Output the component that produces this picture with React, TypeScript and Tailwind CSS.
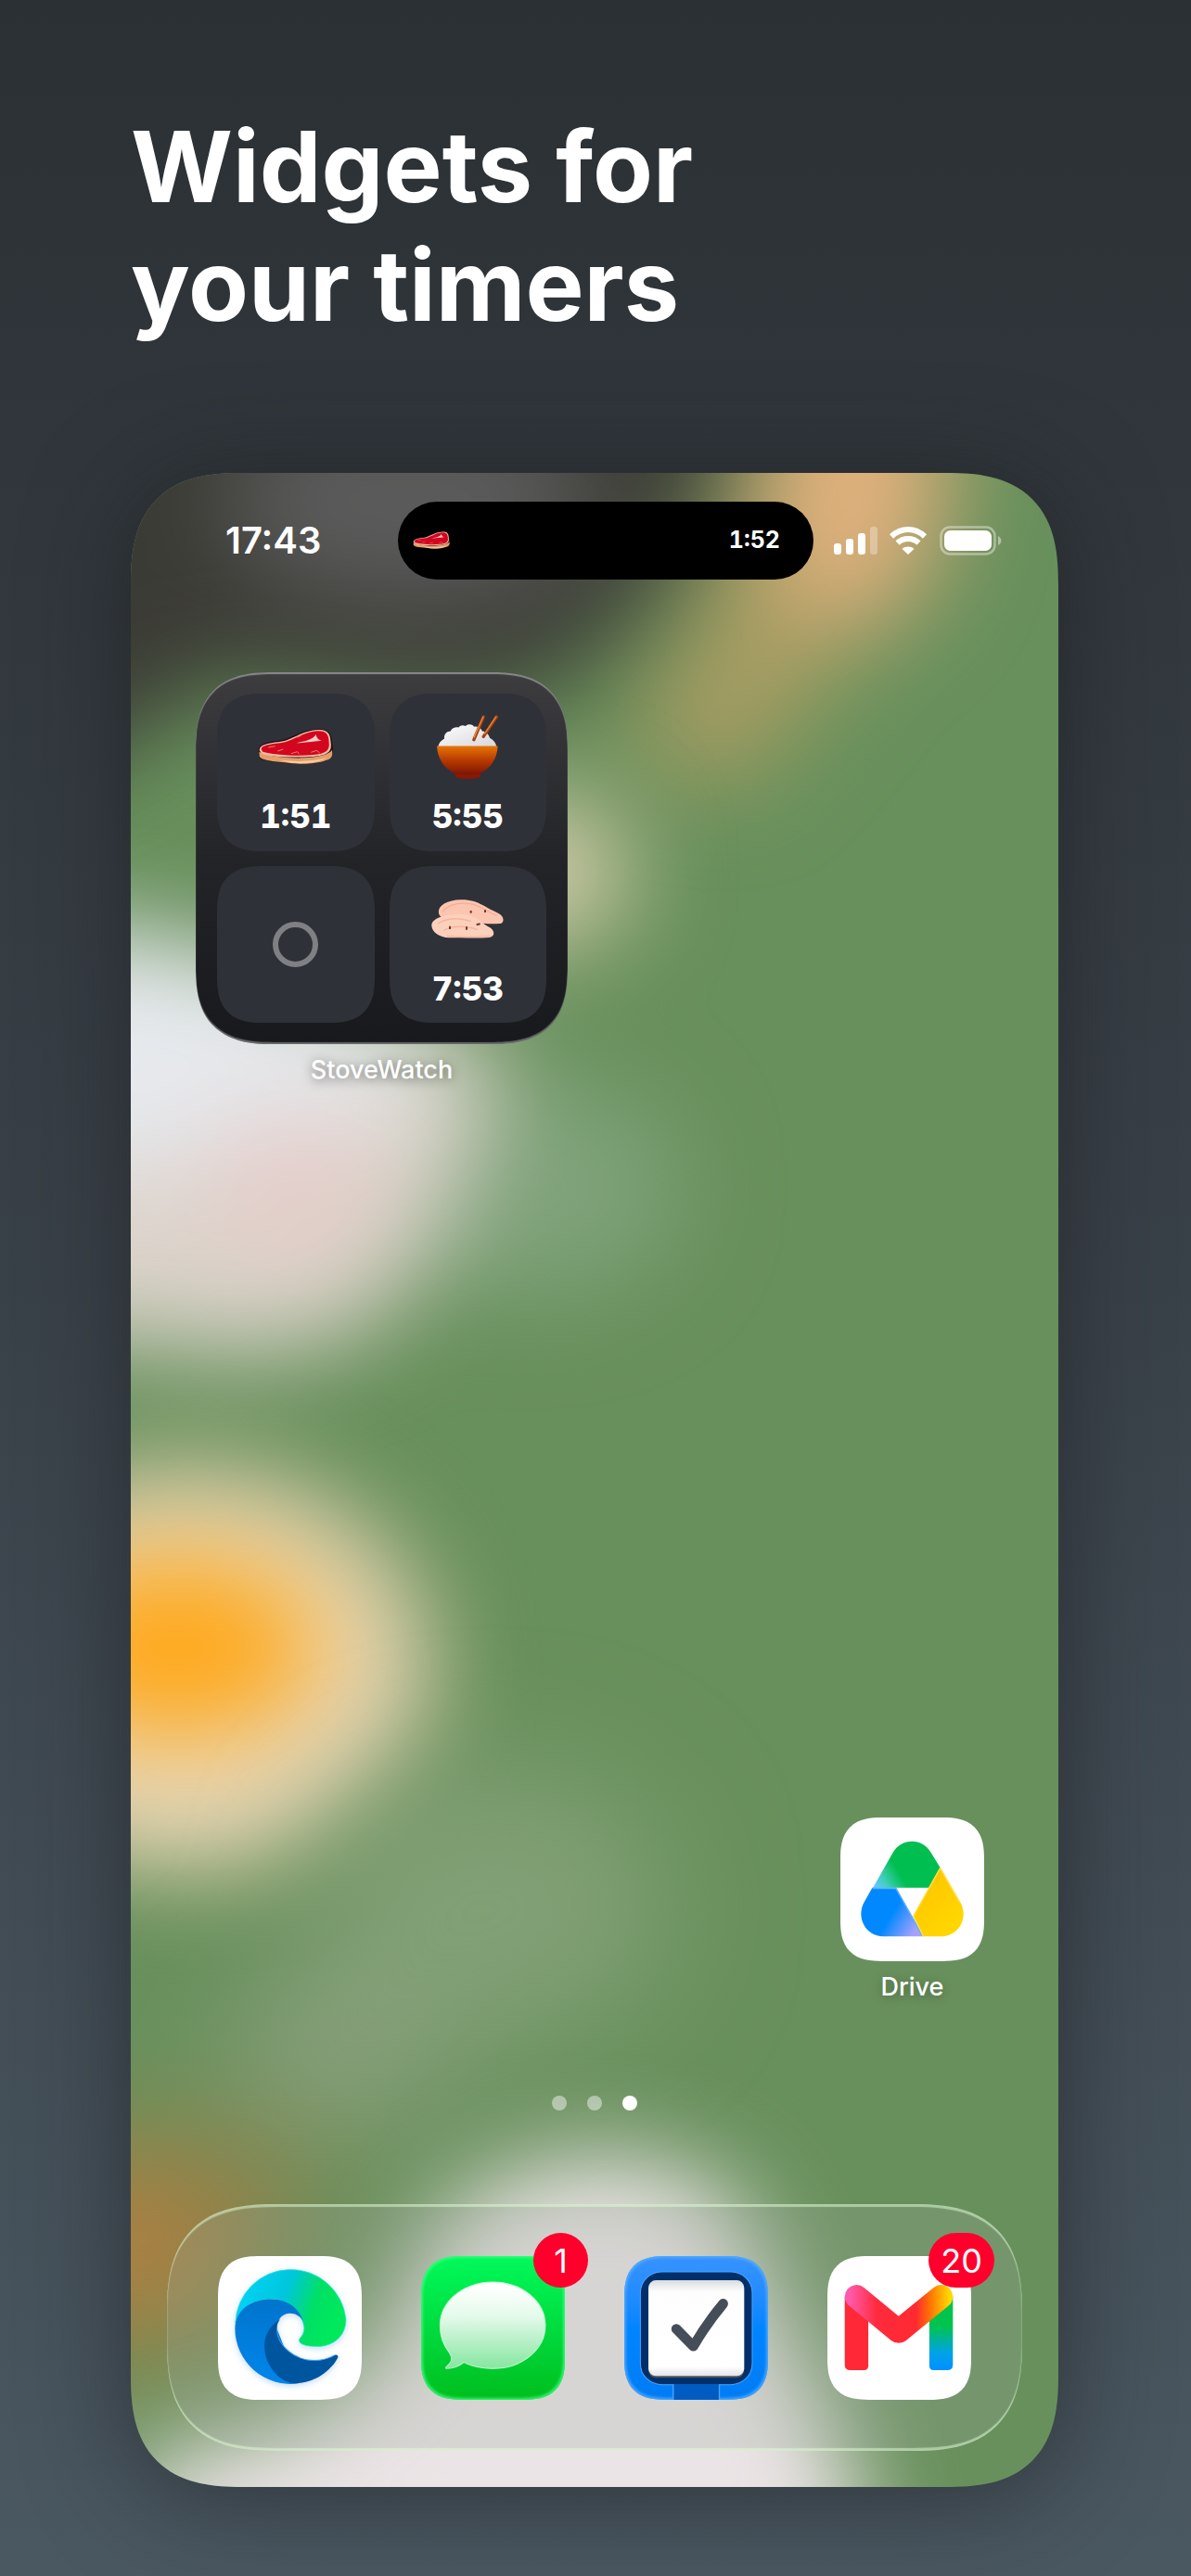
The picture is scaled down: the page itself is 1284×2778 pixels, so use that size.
import type { ReactNode } from 'react';

function Steak({ className }: { className: string }) {
  return (
    <svg viewBox="0 0 243 116" className={className} aria-hidden="true">
      <path d="M2 72C0 52 22 42 66 38C112 33 135 3 196 1C232 0 239 18 241 48C246 74 243 92 225 101C200 114 150 118 105 112C66 108 12 106 3 92Z" fill="#1c1513" />
      <path d="M4 74C22 86 80 96 150 94C190 92 230 84 240 68C243 88 238 97 220 102C190 114 140 116 100 110C60 106 14 104 5 90Z" fill="#e2a06a" />
      <path d="M70 100C120 108 180 106 222 94C200 110 140 116 96 108Z" fill="#f6cda4" />
      <path d="M5 70C4 52 30 46 70 42C115 36 138 6 196 3C228 2 235 18 236 46C240 72 228 86 180 90C120 94 40 92 12 80Z" fill="#f7b9a4" />
      <path d="M11 66C12 54 36 50 72 46C118 40 142 10 194 7C224 7 229 20 230 44C233 70 220 80 178 84C120 90 44 82 16 74Z" fill="#d2061f" />
      <path d="M124 46C152 40 180 34 188 18C190 30 196 35 206 38C194 39 160 44 124 46Z" fill="#f9c9c0" />
      <path d="M64 72L82 66M108 80L128 74L134 82M172 76L190 70L200 78M34 60L56 56M128 28L142 20" stroke="#f07a78" strokeWidth="3" fill="none" />
    </svg>
  );
}

function RiceBowl({ className }: { className: string }) {
  return (
    <svg viewBox="0 0 196 206" className={className} aria-hidden="true">
      <defs>
        <linearGradient id="bowl" x1="0" y1="0" x2="0" y2="1">
          <stop offset="0" stopColor="#e57505" />
          <stop offset="0.5" stopColor="#b93a02" />
          <stop offset="1" stopColor="#7c1502" />
        </linearGradient>
        <linearGradient id="rice" x1="0" y1="0" x2="1" y2="1">
          <stop offset="0" stopColor="#ffffff" />
          <stop offset="1" stopColor="#d6d6dc" />
        </linearGradient>
      </defs>
      <path d="M4 102C6 90 14 82 24 76C22 62 32 52 44 52C48 42 60 38 70 40C76 32 86 32 92 36C100 28 114 30 120 38C130 36 142 42 146 52C160 54 168 64 170 74C182 80 190 90 192 102Z" fill="url(#rice)" />
      <path d="M150 6L119 80M192 6L150 70" stroke="#a8410a" strokeWidth="10" strokeLinecap="round" />
      <path d="M149 6L120 72M190 6L154 60" stroke="#e88734" strokeWidth="4" strokeLinecap="round" />
      <path d="M56 180H142L138 200C130 207 68 207 60 200Z" fill="#8a1804" />
      <path d="M0 100H196C194 142 172 172 140 188C120 193 76 193 56 188C24 172 2 142 0 100Z" fill="url(#bowl)" />
    </svg>
  );
}

function Chicken({ className }: { className: string }) {
  return (
    <svg viewBox="0 0 234 126" className={className} aria-hidden="true">
      <path d="M24 44C20 22 48 2 96 1C150 0 168 24 216 44C236 52 238 76 222 78C184 82 120 74 60 66C34 62 26 54 24 44Z" fill="#fbc5b0" />
      <path d="M36 40C56 12 100 8 138 16C168 26 180 40 212 52" fill="none" stroke="#f4ad98" strokeWidth="4" />
      <path d="M1 86C0 62 36 50 86 48C140 44 160 74 184 88C206 98 208 120 188 123C150 126 100 124 58 124C24 122 4 106 1 86Z" fill="#fdd0bb" />
      <path d="M20 78C56 58 96 60 128 70M40 100C70 84 116 84 150 98M50 118C100 122 150 122 190 118" fill="none" stroke="#f6b49e" strokeWidth="4" />
      <path d="M128 36v8M174 34v8M60 86v10M114 88v10M146 82l12 -3" stroke="#6b3a2c" strokeWidth="6" />
    </svg>
  );
}

function EdgeLogo() {
  return (
    <svg viewBox="0 0 464 464" className="size-full" aria-hidden="true">
      <defs>
        <linearGradient id="edgeTop" x1="0" y1="0" x2="1" y2="0.25">
          <stop offset="0.1" stopColor="#00d2f6" />
          <stop offset="0.5" stopColor="#00c6dc" />
          <stop offset="0.78" stopColor="#00e065" />
          <stop offset="1" stopColor="#00e85c" />
        </linearGradient>
        <linearGradient id="edgeBlue" x1="0.5" y1="0" x2="0.4" y2="1">
          <stop offset="0" stopColor="#0074cc" />
          <stop offset="1" stopColor="#0086ec" />
        </linearGradient>
        <filter id="edgeShadow" x="-20%" y="-20%" width="140%" height="140%">
          <feDropShadow dx="0" dy="6" stdDeviation="9" floodColor="#2070d0" floodOpacity="0.25" />
        </filter>
      </defs>
      <g filter="url(#edgeShadow)">
        <path d="M56 215A179 179 0 0 1 413 205C413 260 370 292 320 292C285 292 262 285 262 272C262 262 278 258 278 232C275 190 235 139 170 139C110 139 65 175 56 215Z" fill="url(#edgeTop)" stroke="#2ae8e0" strokeWidth="2" />
        <path d="M55 233C56 170 112 139 170 139C235 139 272 180 278 224A44 44 0 0 0 190 234L260 411A179 179 0 0 1 55 233Z" fill="url(#edgeBlue)" />
        <path d="M202 203C166 225 150 255 150 290C150 350 195 405 245 411C310 413 365 370 387 328C389 320 383 317 376 320C355 332 335 337 310 337C250 337 190 290 190 234C190 222 194 212 202 203Z" fill="#00559f" />
        <path d="M376 320C355 332 335 337 310 337C250 337 190 290 190 234" fill="none" stroke="#3b9ff0" strokeWidth="3" />
      </g>
    </svg>
  );
}

function MessagesLogo() {
  return (
    <svg viewBox="0 0 464 464" className="size-full" aria-hidden="true">
      <defs>
        <linearGradient id="bubble" x1="0" y1="0" x2="0" y2="1">
          <stop offset="0.05" stopColor="#ffffff" />
          <stop offset="0.4" stopColor="#e3faea" />
          <stop offset="1" stopColor="#86e6a0" />
        </linearGradient>
      </defs>
      <path d="M231 84C325 84 401 146 401 224C401 302 325 363 231 363C196 363 164 356 138 343C120 357 98 363 82 363C78 362 79 358 84 355C98 344 102 328 91 312C72 288 61 258 61 224C61 146 137 84 231 84Z" fill="url(#bubble)" stroke="#c9fad8" strokeWidth="3" />
    </svg>
  );
}

function ThingsLogo() {
  return (
    <svg viewBox="0 0 464 464" className="size-full" aria-hidden="true">
      <defs>
        <linearGradient id="paper" x1="0" y1="0" x2="0" y2="1">
          <stop offset="0" stopColor="#d9dcdf" />
          <stop offset="0.12" stopColor="#fdfdfd" />
          <stop offset="0.9" stopColor="#ffffff" />
          <stop offset="1" stopColor="#e4e4e6" />
        </linearGradient>
      </defs>
      <rect x="52" y="51" width="361" height="364" rx="68" fill="#002f6a" stroke="#4aa6ff" strokeWidth="3" />
      <rect x="158" y="413" width="149" height="51" fill="#005cc2" />
      <path d="M158 464V414M307 464V414" stroke="#4aa6ff" strokeWidth="4" />
      <rect x="78" y="84" width="309" height="309" rx="24" fill="#4d545c" />
      <rect x="78" y="78" width="309" height="309" rx="24" fill="url(#paper)" />
      <path d="M168 235L223 291Q270 212 319 154" fill="none" stroke="#454e58" strokeWidth="32" strokeLinecap="round" strokeLinejoin="round" />
    </svg>
  );
}

function GmailLogo() {
  return (
    <svg viewBox="0 0 464 464" className="size-full" aria-hidden="true">
      <defs>
        <linearGradient id="mailTop" gradientUnits="userSpaceOnUse" x1="56" y1="0" x2="405" y2="0">
          <stop offset="0.05" stopColor="#ff59a8" />
          <stop offset="0.3" stopColor="#ff2a3c" />
          <stop offset="0.66" stopColor="#ff2a30" />
          <stop offset="0.8" stopColor="#ff7a00" />
          <stop offset="0.97" stopColor="#ffd900" />
        </linearGradient>
        <linearGradient id="mailRight" gradientUnits="userSpaceOnUse" x1="0" y1="150" x2="0" y2="368">
          <stop offset="0.35" stopColor="#00c44d" />
          <stop offset="0.75" stopColor="#00a2e8" />
          <stop offset="1" stopColor="#0090ff" />
        </linearGradient>
      </defs>
      <path d="M56 131H132V354Q132 368 118 368H74Q56 368 56 350Z" fill="#ff2836" />
      <path d="M329 131H405V350Q405 368 387 368H343Q329 368 329 354Z" fill="url(#mailRight)" />
      <path d="M94 131L230 243L367 131" fill="none" stroke="url(#mailTop)" strokeWidth="76" strokeLinecap="round" strokeLinejoin="round" />
    </svg>
  );
}

function DriveLogo() {
  return (
    <svg viewBox="0 0 464 464" className="size-full" aria-hidden="true">
      <defs>
        <linearGradient id="driveGreen" gradientUnits="userSpaceOnUse" x1="115" y1="225" x2="190" y2="180">
          <stop offset="0" stopColor="#62c8ff" />
          <stop offset="0.4" stopColor="#3fceb8" />
          <stop offset="1" stopColor="#00bf50" />
        </linearGradient>
        <linearGradient id="driveBlue" gradientUnits="userSpaceOnUse" x1="160" y1="320" x2="240" y2="370">
          <stop offset="0" stopColor="#0088ff" />
          <stop offset="1" stopColor="#a6a2fb" />
        </linearGradient>
        <linearGradient id="driveYellow" gradientUnits="userSpaceOnUse" x1="250" y1="250" x2="390" y2="380">
          <stop offset="0" stopColor="#ffc800" />
          <stop offset="1" stopColor="#ffda00" />
        </linearGradient>
      </defs>
      <path d="M105 227L168 116C196 64 266 64 294 116L322 162L285 227Z" fill="url(#driveGreen)" />
      <path d="M103 227H180L268 384H138C82 384 50 324 76 275Z" fill="url(#driveBlue)" />
      <path d="M104 229H179L264 380" fill="none" stroke="#59b0ff" strokeWidth="4" />
      <path d="M322 160L387 273C415 324 382 384 325 384H268L235 318Z" fill="url(#driveYellow)" />
      <path d="M268 384L236 318L322 164L385 274" fill="none" stroke="#ffe04a" strokeWidth="4" />
    </svg>
  );
}

function Wallpaper() {
  return (
    <svg
      viewBox="0 0 1000 2172"
      preserveAspectRatio="none"
      className="absolute inset-0 size-full"
      aria-hidden="true"
    >
      <defs>
        <filter id="soft" x="-100%" y="-100%" width="300%" height="300%" colorInterpolationFilters="sRGB">
          <feGaussianBlur stdDeviation="52" />
        </filter>
        <filter id="softer" x="-100%" y="-100%" width="300%" height="300%" colorInterpolationFilters="sRGB">
          <feGaussianBlur stdDeviation="66" />
        </filter>
      </defs>
      <rect width="1000" height="2172" fill="#68905c" />
      <g filter="url(#soft)">
        <path d="M700 -160H910C890 60 770 220 650 340L530 300C600 190 670 60 700 -160Z" fill="#a99d62" />
        <ellipse cx="780" cy="10" rx="100" ry="160" fill="#e0b07c" />
        <path d="M-160 -160H660C640 50 560 180 430 240C300 275 170 225 100 225C40 240 0 330 -160 340Z" fill="#3b3b35" />
        <ellipse cx="300" cy="30" rx="200" ry="110" fill="#5b5b5b" />
      </g>
      <g filter="url(#soft)">
        <ellipse cx="440" cy="430" rx="100" ry="85" fill="#d0cba8" />
        <ellipse cx="430" cy="770" rx="160" ry="120" fill="#7fa27a" />
        <path d="M-160 480C40 480 280 560 400 630C380 720 350 790 310 860C270 935 180 960 80 950C20 940 -60 935 -160 935Z" fill="#dbd3ca" />
        <path d="M-160 480C40 480 240 560 340 640C200 740 100 740 -160 770Z" fill="#e6e9ed" />
        <ellipse cx="170" cy="770" rx="95" ry="80" fill="#e4cdc9" />
      </g>
      <g filter="url(#soft)">
        <ellipse cx="60" cy="1290" rx="262" ry="218" fill="#e9d7b6" />
        <ellipse cx="50" cy="1267" rx="150" ry="98" fill="#ffa91c" />
      </g>
      <g filter="url(#softer)">
        <ellipse cx="390" cy="1545" rx="190" ry="150" fill="#81a075" />
        <ellipse cx="225" cy="1700" rx="120" ry="90" fill="#88a07c" />
        <ellipse cx="0" cy="1910" rx="140" ry="110" fill="#b27e3f" />
        <ellipse cx="120" cy="1840" rx="80" ry="50" fill="#8a7f46" />
      </g>
      <g filter="url(#soft)">
        <path d="M-20 2290L10 2140C180 2110 270 2060 300 1960C340 1790 610 1770 670 1900C700 2040 790 2080 800 2290Z" fill="#ebe4e6" />
      </g>
    </svg>
  );
}

function StatusIcons() {
  return (
    <svg viewBox="0 0 181 32" className="ml-[22px] h-8 w-[181px] shrink-0" fill="white" role="img" aria-label="Signal, Wi-Fi, battery">
      <rect x="0" y="19" width="8" height="12" rx="3" />
      <rect x="13" y="14" width="8" height="17" rx="3" />
      <rect x="26" y="8" width="8" height="23" rx="3" />
      <rect x="39" y="1" width="8" height="30" rx="3" opacity="0.3" />
      <g fill="none" stroke="white" strokeWidth="6">
        <path d="M62 11.5C72.500 1.500 87.500 1.500 98 11.500" />
        <path d="M68.500 18.500C75 12.500 85 12.500 91.500 18.500" />
      </g>
      <path d="M80 31L73.500 25C77 21.800 83 21.800 86.500 25Z" />
      <rect x="115.500" y="1.500" width="58" height="29" rx="9.500" fill="none" stroke="white" strokeWidth="2.500" opacity="0.4" />
      <rect x="119" y="5" width="51" height="22" rx="6.500" />
      <path d="M177 11C181.500 13 181.500 19 177 21Z" opacity="0.45" />
    </svg>
  );
}

function TimerTile({ time, children }: { time: string; children: ReactNode }) {
  return (
    <div className="flex aspect-square flex-col items-center rounded-[50px] bg-[#2f3138] pt-[22px] [corner-shape:superellipse(1.4)]">
      <div className="flex h-[70px] items-center justify-center">{children}</div>
      <p className="mt-5 text-[35px] leading-10 font-extrabold text-white tabular-nums">{time}</p>
    </div>
  );
}

function TimerWidget() {
  return (
    <section className="w-[401px]">
      <div className="grid grid-cols-2 gap-4 rounded-[84px] bg-linear-to-b from-[#3d3d40] via-[#232428] to-[#18191c] p-[23px] shadow-[inset_0_2px_1px_rgba(255,255,255,0.4),inset_0_-2px_1px_rgba(255,255,255,0.35)] [corner-shape:superellipse(1.4)]">
        <TimerTile time="1:51">
          <Steak className="w-[81px]" />
        </TimerTile>
        <TimerTile time="5:55">
          <RiceBowl className="h-[69px]" />
        </TimerTile>
        <div className="flex aspect-square items-center justify-center rounded-[50px] bg-[#2f3138] [corner-shape:superellipse(1.4)]">
          <span className="size-[49px] rounded-full border-6 border-[#7f8084]" />
        </div>
        <TimerTile time="7:53">
          <Chicken className="w-[78px]" />
        </TimerTile>
      </div>
      <p className="mt-[10px] text-center text-[27px] leading-9 font-medium text-white [text-shadow:0_2px_12px_rgba(0,0,0,0.5)]">
        StoveWatch
      </p>
    </section>
  );
}

interface AppIconProps {
  name: string;
  background: string;
  badge?: number;
  children: ReactNode;
}

function AppIcon({ name, background, badge, children }: AppIconProps) {
  return (
    <button type="button" aria-label={name} className="relative size-[155px]">
      <span className={`block size-full overflow-hidden rounded-[45px] [corner-shape:superellipse(1.4)] ${background}`}>
        {children}
      </span>
      {badge && (
        <span className="absolute -top-[25px] -right-[25px] flex h-[59px] min-w-[59px] items-center justify-center rounded-full bg-[#ff002d] px-[13px] text-[36px] leading-none text-white">
          {badge}
        </span>
      )}
    </button>
  );
}

export default function App() {
  return (
    <main className="flex min-h-screen flex-col bg-linear-to-b from-[#2b3034] via-[#394148] to-[#4a5861] px-[141px] pt-[116px] pb-24 font-['Inter',sans-serif]">
      <h1 className="text-[106px] leading-[128px] font-bold text-white">
        Widgets for
        <br />
        your timers
      </h1>

      <div className="relative isolate mt-[138px] flex max-w-[1000px] flex-1 flex-col overflow-hidden rounded-[122px] shadow-[0_10px_110px_rgba(28,28,32,0.6)] [corner-shape:superellipse(1.4)]">
        <Wallpaper />

        <header className="relative flex items-center pt-[31px] pr-[61px] pl-[102px]">
          <time className="w-[186px] shrink-0 text-[40px] leading-[44px] font-semibold text-white">17:43</time>
          <div className="flex h-[84px] flex-1 items-center justify-between rounded-full bg-black pr-9 pl-4">
            <Steak className="w-10" />
            <span className="text-[25px] font-bold text-white tabular-nums">1:52</span>
          </div>
          <StatusIcons />
        </header>

        <div className="relative mt-[100px] pl-[70px]">
          <TimerWidget />
        </div>

        <div className="relative mt-auto flex justify-end pr-[80px]">
          <div className="flex flex-col items-center">
            <AppIcon name="Drive" background="bg-white">
              <DriveLogo />
            </AppIcon>
            <p className="mt-[10px] text-[27px] leading-9 font-medium text-white [text-shadow:0_2px_12px_rgba(0,0,0,0.3)]">
              Drive
            </p>
          </div>
        </div>

        <div className="relative mt-[99px] flex justify-center gap-[22px]">
          <span className="size-4 rounded-full bg-white/45" />
          <span className="size-4 rounded-full bg-white/45" />
          <span className="size-4 rounded-full bg-white" />
        </div>

        <nav className="relative mx-[39px] mt-[101px] mb-[39px] flex justify-between rounded-[118px] bg-[#9ba89b]/25 px-[55px] pt-[56px] pb-[55px] shadow-[inset_0_3px_1px_rgba(225,255,215,0.5),inset_0_-3px_1px_rgba(225,255,215,0.5),inset_0_0_3px_rgba(255,255,255,0.2)] [corner-shape:superellipse(1.4)]">
          <AppIcon name="Edge" background="bg-white">
            <EdgeLogo />
          </AppIcon>
          <AppIcon
            name="Messages"
            background="bg-linear-to-b from-[#00fa5a] to-[#00be1c] shadow-[inset_0_0_3px_2px_rgba(60,255,130,0.8)]"
            badge={1}
          >
            <MessagesLogo />
          </AppIcon>
          <AppIcon
            name="Things"
            background="bg-linear-to-b from-[#3693ff] via-[#0085ff] to-[#007cf5] shadow-[inset_0_0_3px_2px_rgba(90,175,255,0.8)]"
          >
            <ThingsLogo />
          </AppIcon>
          <AppIcon name="Gmail" background="bg-white" badge={20}>
            <GmailLogo />
          </AppIcon>
        </nav>
      </div>
    </main>
  );
}
